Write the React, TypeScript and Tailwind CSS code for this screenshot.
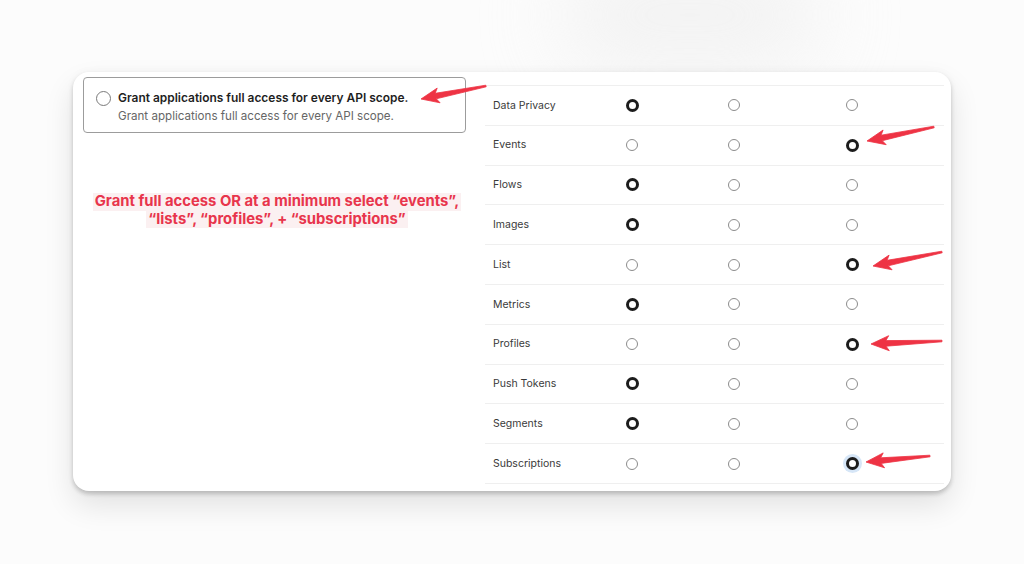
import React from "react";

type Pt = [number, number];

function arrowPoints(tail: Pt, tip: Pt): string {
  const [tx, ty] = tail;
  const [hx, hy] = tip;
  const dx = hx - tx;
  const dy = hy - ty;
  const len = Math.hypot(dx, dy);
  const ux = dx / len;
  const uy = dy / len;
  const nx = -uy;
  const ny = ux;
  const headLen = 18;
  const headW = 7.5;
  const shaftTail = 0.8;
  const shaftHead = 2.8;
  const bx = hx - ux * headLen;
  const by = hy - uy * headLen;
  const notch = 3;
  const cx = bx + ux * notch;
  const cy = by + uy * notch;
  const pts: Pt[] = [
    [tx + nx * shaftTail, ty + ny * shaftTail],
    [cx + nx * shaftHead, cy + ny * shaftHead],
    [bx + nx * headW, by + ny * headW],
    [hx, hy],
    [bx - nx * headW, by - ny * headW],
    [cx - nx * shaftHead, cy - ny * shaftHead],
    [tx - nx * shaftTail, ty - ny * shaftTail],
  ];
  return pts.map((p) => `${p[0].toFixed(1)},${p[1].toFixed(1)}`).join(" ");
}

const arrows: { tail: Pt; tip: Pt }[] = [
  { tail: [486, 86], tip: [421, 99] },
  { tail: [934, 127], tip: [867, 141] },
  { tail: [942, 252], tip: [873, 266] },
  { tail: [942, 341], tip: [871, 344] },
  { tail: [930, 456], tip: [866, 462] },
];

const rows: { name: string; sel: number }[] = [
  { name: "Data Privacy", sel: 0 },
  { name: "Events", sel: 2 },
  { name: "Flows", sel: 0 },
  { name: "Images", sel: 0 },
  { name: "List", sel: 2 },
  { name: "Metrics", sel: 0 },
  { name: "Profiles", sel: 2 },
  { name: "Push Tokens", sel: 0 },
  { name: "Segments", sel: 0 },
  { name: "Subscriptions", sel: 2 },
];

function Radio({ on, focus }: { on: boolean; focus?: boolean }) {
  if (on) {
    return (
      <span
        className={
          "block h-[13px] w-[13px] rounded-full border-[3.5px] border-[#1c1c1c] bg-white " +
          (focus ? "ring-[3px] ring-[#d6e6f7]" : "")
        }
      />
    );
  }
  return <span className="block h-[12px] w-[12px] rounded-full border border-[#8c8c8c] bg-white" />;
}

export default function App() {
  return (
    <div
      className="relative h-[564px] w-[1024px] overflow-hidden bg-[#fcfcfc] pl-[73px] pt-[72px]"
      style={{ fontFamily: "Inter, 'Noto Sans', sans-serif" }}
    >
      <div className="pointer-events-none absolute left-[560px] top-[-40px] h-[110px] w-[260px] rounded-full bg-[#ececec] opacity-60 blur-[40px]" />
      <div className="relative flex h-[419px] w-[878px] rounded-[16px] bg-white shadow-[0_3px_4px_rgba(0,0,0,0.18),0_14px_30px_rgba(0,0,0,0.11),0_0_8px_rgba(0,0,0,0.04)]">
        <div className="flex w-[412px] flex-col pl-[10px] pt-[5px]">
          <div className="flex h-[56px] w-[383px] items-start gap-[7px] rounded-[4px] border border-[#9c9c9c] pl-[12px] pt-[12px]">
            <span className="mt-[1px] block h-[15px] w-[15px] shrink-0 rounded-full border-[1.5px] border-[#7a7a7a]" />
            <div className="flex flex-col">
              <span className="text-[11.95px] font-semibold leading-[16px] text-[#1e1e1e]">
                Grant applications full access for every API scope.
              </span>
              <span className="mt-[2px] text-[11.6px] leading-[16px] text-[#666]">
                Grant applications full access for every API scope.
              </span>
            </div>
          </div>
          <div className="mt-[60px] flex flex-col items-center pr-[14px] text-center text-[14.8px] font-bold leading-[17.5px] text-[#e8354c]">
            <span className="bg-[#fbf0f1] px-[2px]">Grant full access OR at a minimum select “events”,</span>
            <span className="bg-[#fbf0f1] px-[2px]">“lists”, “profiles”, + “subscriptions”</span>
          </div>
        </div>
        <div className="mt-[13px] w-[459px] self-start border-t border-[#efefef]">
          {rows.map((r, i) => (
            <div
              key={r.name}
              className="grid h-[39.8px] grid-cols-[96px_102px_102px_134px_1fr] items-center border-b border-[#efefef]"
            >
              <span className="pl-[8px] text-[10.5px] text-[#3a3a3a]">{r.name}</span>
              {[0, 1, 2].map((c) => (
                <div key={c} className="flex justify-center">
                  <Radio on={r.sel === c} focus={i === rows.length - 1 && r.sel === c} />
                </div>
              ))}
              <span />
            </div>
          ))}
        </div>
      </div>
      <svg className="pointer-events-none absolute left-0 top-0" width="1024" height="564">
        {arrows.map((a, i) => (
          <polygon key={i} points={arrowPoints(a.tail, a.tip)} fill="#ee3344" strokeLinejoin="round" stroke="#ee3344" strokeWidth="0.8" />
        ))}
      </svg>
    </div>
  );
}
